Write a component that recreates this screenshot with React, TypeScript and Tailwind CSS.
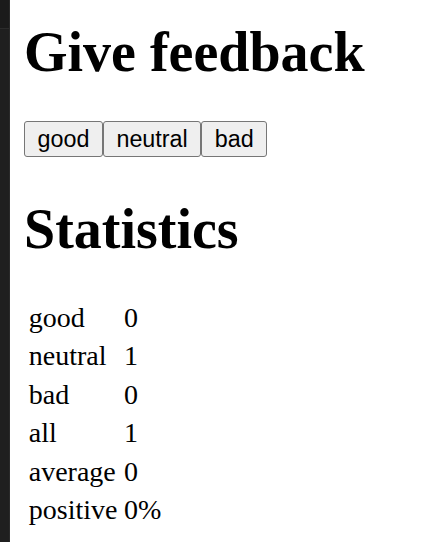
import React from 'react';

const stats: [string, string][] = [
  ['good', '0'],
  ['neutral', '1'],
  ['bad', '0'],
  ['all', '1'],
  ['average', '0'],
  ['positive', '0%'],
];

function FeedbackButton({ label }: { label: string }) {
  return (
    <button className="font-['Liberation_Sans',Arial,sans-serif] text-[23.33px] leading-[normal] text-black bg-[#efefef] border border-[#767676] rounded-[3px] px-[12.5px] py-[3.6px] cursor-default">
      {label}
    </button>
  );
}

export default function App() {
  return (
    <div className="flex min-h-[542px] bg-white text-black font-['Liberation_Serif','Times_New_Roman',serif]">
      <div className="w-[10px] shrink-0 bg-[#1f1f1f] border-r border-[#2a2a2a] flex flex-col">
        <div className="h-[29px] bg-[#1b1b1b] border-b border-[#2c2c2c]" />
      </div>
      <div className="pl-[14px] flex flex-col">
        <h1 className="mt-[19.5px] mb-[37.5px] text-[56px] leading-[normal] font-bold">Give feedback</h1>
        <div className="flex">
          <FeedbackButton label="good" />
          <FeedbackButton label="neutral" />
          <FeedbackButton label="bad" />
        </div>
        <h1 className="mt-[39.5px] mb-[36.5px] text-[56px] leading-[normal] font-bold">Statistics</h1>
        <table className="border-separate border-spacing-[3.5px] self-start">
          <tbody>
            {stats.map(([name, value]) => (
              <tr key={name}>
                <td className="p-[1.75px] text-[28px] leading-[normal]">{name}</td>
                <td className="p-[1.75px] text-[28px] leading-[normal]">{value}</td>
              </tr>
            ))}
          </tbody>
        </table>
      </div>
    </div>
  );
}
